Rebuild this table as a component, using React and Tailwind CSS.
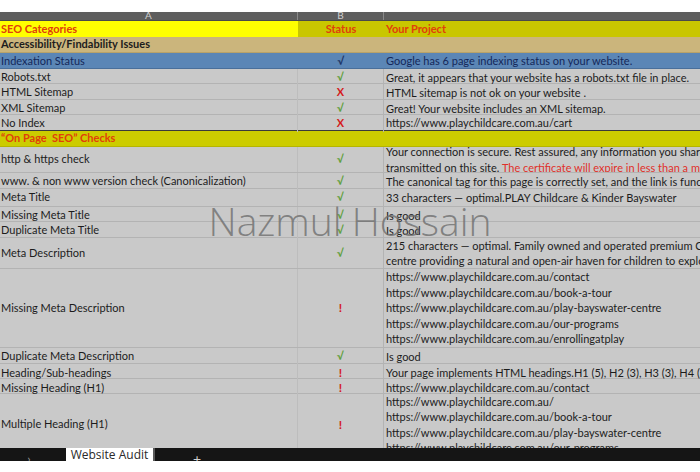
import React from "react";

const CHECK = "√";

function Mark({ v }) {
  if (v === "ok") return <span className="text-[#5f9f3c] font-bold text-[11px]">{CHECK}</span>;
  if (v === "x") return <span className="text-[#d41a1a] font-bold text-[11px]">X</span>;
  if (v === "!") return <span className="text-[#d41a1a] font-bold text-[12px]">!</span>;
  return null;
}

function Row({ h, label, status, lines, bg = "bg-[#c9c9c9]" }) {
  return (
    <div className={`grid grid-cols-[298px_86px_1fr] border-b border-[#b3b3b3] ${bg} ${h}`}>
      <div className="flex items-center pl-[1px] border-r border-[#bdbdbd] truncate">{label}</div>
      <div className="flex items-center justify-center border-r border-[#b3b3b3]">
        <Mark v={status} />
      </div>
      <div className="flex flex-col justify-center pl-[2px] leading-[15.5px] whitespace-nowrap overflow-hidden">
        {lines.map((l, i) => (
          <div key={i}>{l}</div>
        ))}
      </div>
    </div>
  );
}

const URL = "https://www.playchildcare.com.au";

export default function App() {
  return (
    <div className="w-[700px] h-[472px] bg-white overflow-hidden font-['Lato','Liberation_Sans',sans-serif] text-[11px] text-[#1c1c1c]">
      <div className="h-[12px] bg-white" />
      {/* column header strip */}
      <div className="h-[9px] grid grid-cols-[298px_86px_1fr] bg-[#5e5e5e] border-b border-[#4a4a4a] overflow-hidden text-[#cfcfcf] text-[10px] leading-none">
        <div className="flex justify-center items-end -mt-[4px] border-r border-[#8a8a8a]">A</div>
        <div className="flex justify-center items-end -mt-[4px] border-r border-[#8a8a8a]">B</div>
        <div />
      </div>

      <div className="relative h-[427px] overflow-hidden">
        {/* title row */}
        <div className="grid grid-cols-[298px_86px_1fr] h-[16px] font-bold text-[#e0400a] leading-[15px]">
          <div className="bg-[#ffff00] pl-[1px]">SEO Categories</div>
          <div className="bg-[#c9c600] text-center">Status</div>
          <div className="bg-[#c9c600] pl-[2px]">Your Project</div>
        </div>
        <div className="h-[16px] bg-[#cbb57c] font-bold pl-[1px] flex items-center border-b border-[#b8a26a]">
          Accessibility/Findability Issues
        </div>
        <div className="grid grid-cols-[298px_86px_1fr] h-[16px] bg-[#5b86b6] text-[#14285a] border-b border-[#4a6f9a]">
          <div className="flex items-center pl-[1px]">Indexation Status</div>
          <div className="flex items-center justify-center font-bold text-[#1d3566]">{CHECK}</div>
          <div className="flex items-center pl-[2px]">Google has 6 page indexing status on your website.</div>
        </div>
        <Row h="h-[15px]" label="Robots.txt" status="ok" lines={["Great, it appears that your website has a robots.txt file in place."]} />
        <Row h="h-[16px]" label="HTML Sitemap" status="x" lines={["HTML sitemap is not ok on your website ."]} />
        <Row h="h-[15px]" label="XML Sitemap" status="ok" lines={["Great! Your website includes an XML sitemap."]} />
        <div className="grid grid-cols-[298px_86px_1fr] h-[16px] bg-[#c9c9c9] border-b border-[#3a3a3a]">
          <div className="flex items-center pl-[1px] border-r border-[#bdbdbd]">No Index</div>
          <div className="flex items-center justify-center border-r border-[#b3b3b3]"><Mark v="x" /></div>
          <div className="flex items-center pl-[2px]">{URL}/cart</div>
        </div>
        <div className="h-[16px] bg-[#cccc00] font-bold text-[#e0400a] pl-[1px] flex items-center border-b border-[#b5b500]">
          “On Page&nbsp; SEO” Checks
        </div>
        <Row
          h="h-[26px]"
          label="http & https check"
          status="ok"
          lines={[
            "Your connection is secure. Rest assured, any information you share",
            <span>
              transmitted on this site. <span className="text-[#e0302a]">The certificate will expire in less than a month</span>
            </span>,
          ]}
        />
        <Row h="h-[16px]" label="www. & non www version check (Canonicalization)" status="ok" lines={["The canonical tag for this page is correctly set, and the link is functional"]} />
        <Row h="h-[18px]" label="Meta Title" status="ok" lines={[" 33 characters — optimal.PLAY Childcare & Kinder Bayswater"]} />
        <Row h="h-[15px]" label="Missing Meta Title" status="ok" lines={["Is good"]} />
        <Row h="h-[16px]" label="Duplicate Meta Title" status="ok" lines={["Is good"]} />
        <Row
          h="h-[31px]"
          label="Meta Description"
          status="ok"
          lines={[
            "215 characters — optimal. Family owned and operated premium Childcare",
            "centre providing a natural and open-air haven for children to explore",
          ]}
        />
        <Row
          h="h-[79px]"
          label="Missing Meta Description"
          status="!"
          lines={[
            `${URL}/contact`,
            `${URL}/book-a-tour`,
            `${URL}/play-bayswater-centre`,
            `${URL}/our-programs`,
            `${URL}/enrollingatplay`,
          ]}
        />
        <Row h="h-[16px]" label="Duplicate Meta Description" status="ok" lines={["Is good"]} />
        <Row h="h-[15px]" label="Heading/Sub-headings" status="!" lines={["Your page implements HTML headings.H1 (5), H2 (3), H3 (3), H4 (7), H5"]} />
        <Row h="h-[15px]" label="Missing Heading (H1)" status="!" lines={[`${URL}/contact`]} />
        <Row
          h="h-[62px]"
          label="Multiple Heading (H1)"
          status="!"
          lines={[`${URL}/`, `${URL}/book-a-tour`, `${URL}/play-bayswater-centre`, `${URL}/our-programs`]}
        />

        {/* watermark */}
        <div className="absolute left-0 right-0 top-[180px] flex justify-center pointer-events-none">
          <span className="font-['Open_Sans',sans-serif] font-light text-[39px] leading-none text-[#6e6e6e]/80">
            Nazmul Hossain
          </span>
        </div>
      </div>

      {/* sheet tabs */}
      <div className="h-[13px] bg-[#151515] flex items-end relative overflow-hidden">
        <div className="w-[66px] h-full flex items-end justify-center pb-0 text-[#9a9a9a] text-[12px] leading-none">
          <span className="ml-[-8px] translate-y-[4px]">›</span>
        </div>
        <div className="w-[87px] h-[14px] bg-white flex justify-center overflow-hidden font-['Open_Sans',sans-serif] text-[12px] text-[#2a2a2a] leading-none pt-[2px]">
          Website Audit
        </div>
        <div className="w-[2px] h-full bg-[#5a5a5a]" />
        <div className="w-[38px]" />
        <div className="h-full flex items-end text-[#d0d0d0] text-[14px] leading-none">
          <span className="translate-y-[5px]">+</span>
        </div>
      </div>
      <div className="h-[11px] bg-white" />
    </div>
  );
}
